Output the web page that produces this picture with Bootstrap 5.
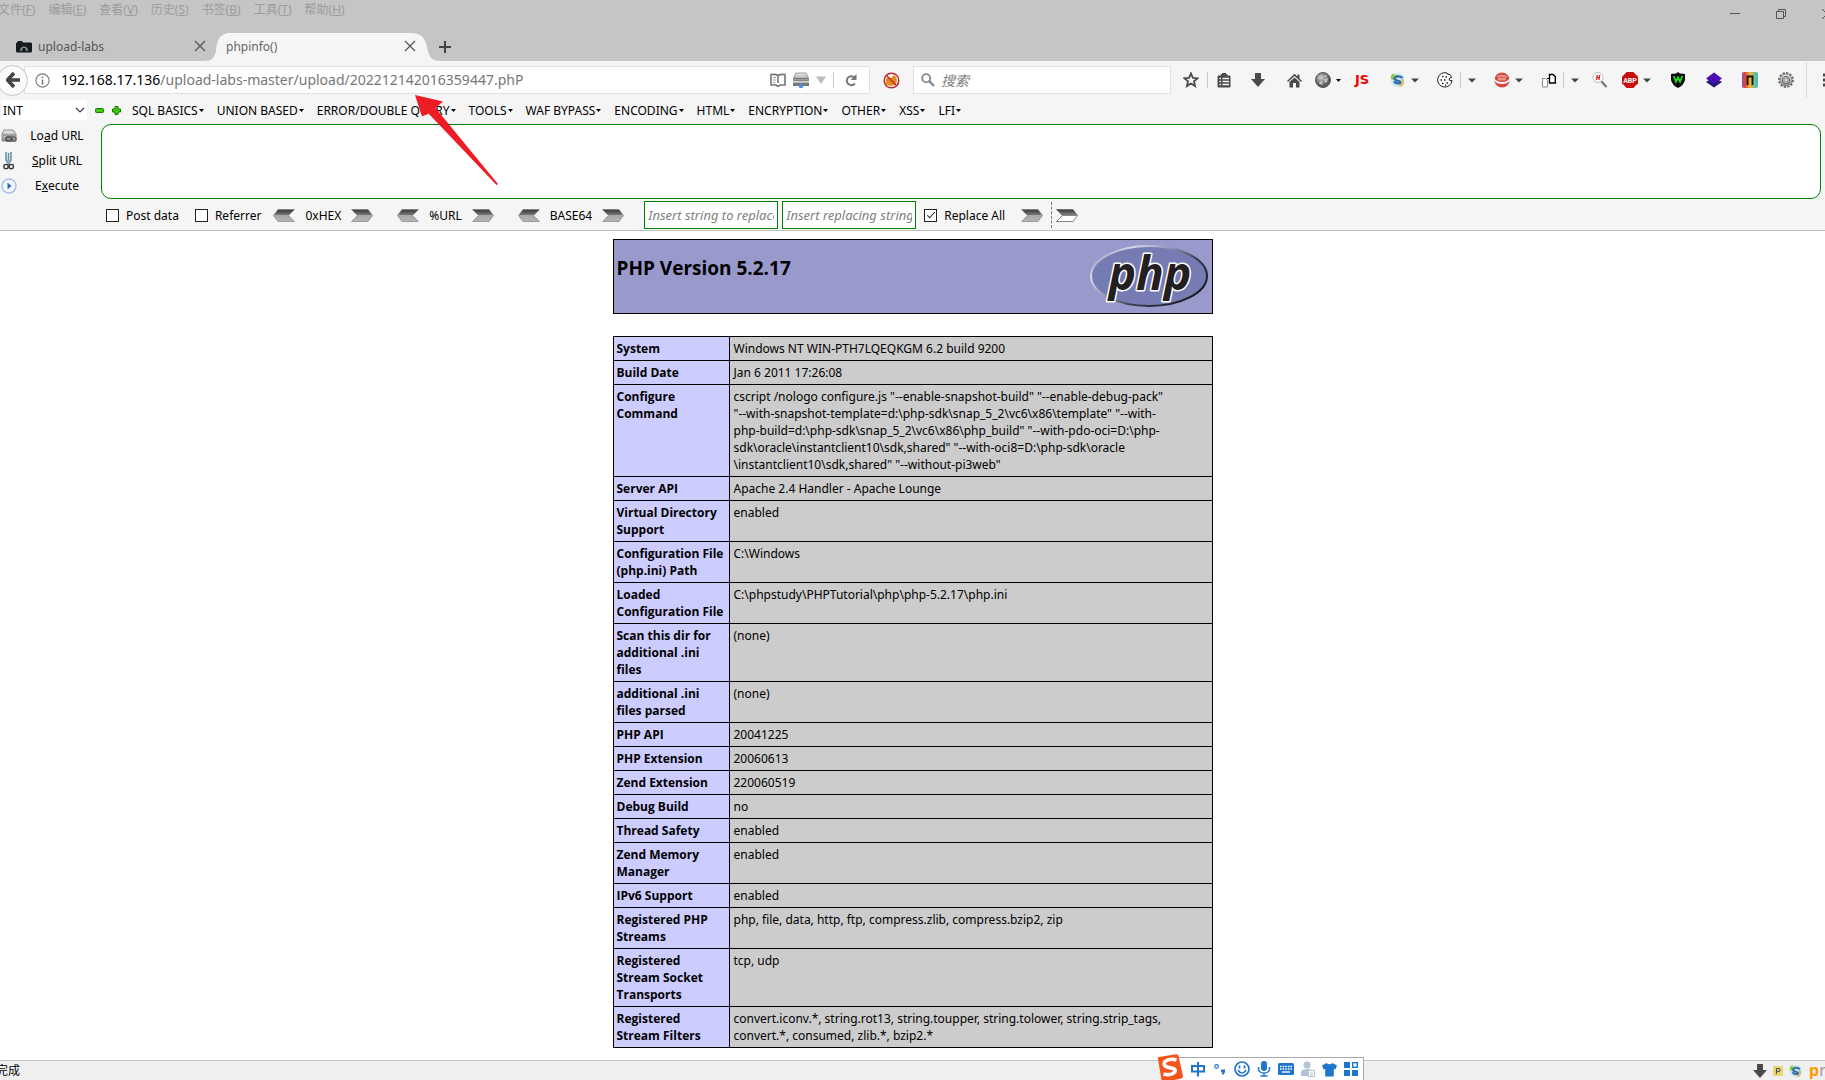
<!DOCTYPE html>
<html lang="zh-CN">
<head>
<meta charset="utf-8">
<meta name="viewport" content="width=device-width, initial-scale=1">
<title>phpinfo()</title>
<link href="https://cdn.jsdelivr.net/npm/bootstrap@5.3.0/dist/css/bootstrap.min.css" rel="stylesheet">
<script src="https://cdn.jsdelivr.net/npm/bootstrap@5.3.0/dist/js/bootstrap.bundle.min.js"></script>
<style>
  body { font-family: "Noto Sans", "Noto Sans CJK SC", sans-serif; font-size: 12px; line-height: 17px; color: #000; background: #fff; }
  button { font: inherit; color: inherit; background: none; border: 0; padding: 0; }
  svg { display: block; flex: none; }
  .titlebar { background: #c5c5c5; }
  .menu-line { height: 33px; padding-top: 1px; }
  .menu-line nav { gap: 13px; margin-left: -2px; color: #9c9c9c; }
  .menu-line a { color: inherit; text-decoration: none; }
  .win-buttons { gap: 30px; color: #555; padding-top: 5px; margin-right: -10px; }
  .tab-line { height: 28px; color: #555; }
  .tab-idle { width: 206px; padding: 0 0 2px 16px; gap: 6px; }
  .tab-live { width: 233px; padding: 0 23px 2px 20px; color: #666; }
  .tab-live > * { position: relative; }
  .tab-live > .tab-shape { position: absolute; left: -2px; top: 0; }
  .chrome-tools { background: #f5f5f5; border-bottom: 1px solid #bfbfbf; }
  .nav-line { height: 38px; }
  .back-btn { width: 31px; height: 31px; margin-left: -3px; border: 1px solid #c4c4c4; border-radius: 50%; background: #fbfbfb; z-index: 1; }
  .url-field { height: 28px; background: #fff; border: 1px solid #e0e0e0; margin-left: -4px; padding: 0 8px 0 10px; flex: 1 1 0; min-width: 0; }
  .url-text { font-size: 14px; line-height: 20px; color: #777; white-space: nowrap; padding-left: 11px; }
  .url-text b { font-weight: 400; color: #000; }
  .url-tools { gap: 7px; }
  .search-field { height: 28px; background: #fff; border: 1px solid #e0e0e0; padding: 0 7px; gap: 6px; flex: 0 1 258px; min-width: 0; }
  .search-field input { border: 0; outline: 0; width: 100%; min-width: 0; font-size: 14px; font-style: italic; padding: 0; }
  .search-field input::placeholder { color: #808080; }
  .block-btn { width: 43px; }
  .rule-v { width: 1px; height: 16px; background: #c8c8c8; flex: none; }
  .rule-tall { width: 1px; height: 36px; background: #dcdcdc; flex: none; margin: 0 16px 0 2px; }
  .burger { margin-right: -12px; }
  .slot-24, .slot-32, .slot-36, .slot-48, .slot-56 { display: flex; align-items: center; justify-content: center; flex: none; height: 30px; gap: 5px; }
  .slot-24 { width: 24px; } .slot-32 { width: 32px; } .slot-36 { width: 36px; } .slot-48 { width: 48px; } .slot-56 { width: 56px; gap: 7px; }
  .js-word { font: 700 13px/16px "DejaVu Sans", sans-serif; color: #f00000; }
  .hack-top { height: 22px; gap: 7px; }
  .hack-top .form-select { width: 86px; height: 20px; margin-left: 1px; padding: 0 20px 0 2px; border: 0; border-radius: 0; font-size: 12px; line-height: 17px; background-size: 10px 10px; background-position: right 2px center; color: #000; }
  .pm { gap: 8px; width: 33px; padding-left: 1px; margin-right: -2px; }
  .hack-menus { gap: 13px; padding-left: 0; }
  .hack-menus button { display: flex; align-items: center; gap: 1px; white-space: nowrap; }
  .hack-mid { padding-top: 2px; }
  .side-cmds { width: 101px; }
  .side-cmds button { display: flex; align-items: center; height: 25px; padding-left: 1px; }
  .side-cmds span { width: 80px; text-align: center; }
  .hack-area { height: 75px; border: 1px solid #008000; border-radius: 10px; resize: none; outline: 0; background: #fff; margin: 1px 4px 0 0; min-width: 0; }
  .hack-bottom { height: 31px; padding: 1px 0 0 106px; }
  .tick { appearance: none; width: 13px; height: 13px; border: 1px solid #222; background: #fff; margin: 0; flex: none; display: block; }
  .tick:checked::before { content: ""; display: block; width: 8px; height: 4px; margin: 2px 0 0 2px; border-left: 1px solid #222; border-bottom: 1px solid #222; transform: rotate(-48deg); }
  .tick-pair { display: flex; align-items: center; gap: 7px; }
  .codec { display: flex; align-items: center; gap: 10px; }
  .swap-in { width: 134px; height: 28px; border: 1px solid #008000; background: #fff; padding: 0 3px; outline: 0; font-size: 13px; font-style: italic; }
  .swap-in::placeholder { color: #808080; }
  .dash { border-left: 1px dashed #777; height: 26px; }
  main { padding-top: 8px; }
  .info-wrap { max-width: 600px; }
  .info-head { background: #9999cc; border: 1px solid #000; height: 75px; padding: 4px 3px 0 3px; margin-bottom: 22px; }
  .info-head h1 { font: 700 19px/26px "Open Sans", sans-serif; margin: 11px 0 0; }
  .info-head svg { overflow: visible; }
  .info-table { width: 100%; border-collapse: collapse; table-layout: fixed; }
  .info-table th, .info-table td { border: 1px solid #000; padding: 3px; vertical-align: top; }
  .info-table th { width: 116px; background: #ccccff; font-family: "Open Sans", sans-serif; font-weight: 700; }
  .info-table td { background: #cccccc; padding-left: 4px; }
  .status-line { height: 20px; border-top: 1px solid #c3c3c3; background: #f0f0f0; }
  .status-line > span { margin-left: -4px; padding-top: 1px; }
  .status-icons { gap: 6px; height: 19px; }
  .pr-word { font-size: 16px; line-height: 17px; color: #999; width: 16px; overflow: hidden; }
  .pr-word b { color: #ff9900; }
  .ime-bar { right: 461px; bottom: 0; height: 23px; width: 201px; background: #fff; border: 1px solid #a9a9a9; border-bottom: 0; padding: 0 5px 0 26px; color: #1f75c9; }
  .ime-logo { left: -8px; top: -4px; }
  .pointer { left: 412px; top: 92px; pointer-events: none; }
</style>
</head>
<body class="d-flex flex-column min-vh-100 position-relative overflow-x-hidden">

<svg width="0" height="0" class="position-absolute" aria-hidden="true">
  <defs>
    <linearGradient id="gArrow" x1="0" y1="0" x2="0" y2="1"><stop offset="0" stop-color="#383838"/><stop offset=".48" stop-color="#7b7b7b"/><stop offset=".5" stop-color="#a8a8a8"/><stop offset="1" stop-color="#b4b4b4"/></linearGradient>
    <linearGradient id="gArrowW" x1="0" y1="0" x2="0" y2="1"><stop offset="0" stop-color="#383838"/><stop offset=".52" stop-color="#8b8b8b"/><stop offset=".53" stop-color="#fff"/><stop offset="1" stop-color="#fff"/></linearGradient>
    <linearGradient id="gRain"><stop offset="0" stop-color="#9a4ea0"/><stop offset=".2" stop-color="#e0443c"/><stop offset=".5" stop-color="#f2b233"/><stop offset=".75" stop-color="#7fc08a"/><stop offset="1" stop-color="#3fb8c8"/></linearGradient>
    <linearGradient id="gMetal" x1="0" y1="0" x2="0" y2="1"><stop offset="0" stop-color="#eee"/><stop offset="1" stop-color="#8c8c8c"/></linearGradient>
    <linearGradient id="gRim" x1="0" y1="0" x2="1" y2=".7"><stop offset="0" stop-color="#6f77a8"/><stop offset=".25" stop-color="#d9dbea"/><stop offset=".45" stop-color="#9b9fc0"/><stop offset=".7" stop-color="#3c3d50"/><stop offset="1" stop-color="#17171c"/></linearGradient>
    <radialGradient id="gBall" cx=".4" cy=".35"><stop offset="0" stop-color="#c9c9c9"/><stop offset="1" stop-color="#5c5c5c"/></radialGradient>
    <symbol id="aR" viewBox="0 0 22 13"><path d="M.5.5H17L21.5 6.500 17 12.500H.5L6.500 6.500Z" fill="url(#gArrow)" stroke="#777" stroke-width=".6"/></symbol>
    <symbol id="aL" viewBox="0 0 22 13"><path d="M21.500.5H5L.5 6.500 5 12.500H21.500L15.500 6.500Z" fill="url(#gArrow)" stroke="#777" stroke-width=".6"/></symbol>
    <symbol id="cr" viewBox="0 0 8 5"><path d="M0 .5H8L4 4.500Z" fill="#444"/></symbol>
    <symbol id="crs" viewBox="0 0 5 3"><path d="M0 0H5L2.500 3Z" fill="#000"/></symbol>
    <symbol id="x12" viewBox="0 0 12 12"><path d="M1 1L11 11M11 1L1 11" stroke="#555" stroke-width="1.200"/></symbol>
    <symbol id="swirl" viewBox="0 0 16 16"><circle cx="8" cy="8" r="7" fill="#bfe4f5" opacity=".8"/><path d="M1 7C0 4 2 1.500 4.500 1.500L4 4C5 3 6.500 2.800 7.500 3L5 5.500C4 6 3.500 7 3.500 8Z" fill="#8fc93a"/><path d="M12.500 6C10 3.500 5 4 4.500 6.800C4.500 9 10.500 8.500 10.500 10.200C10.500 12 6 12 4 9.500" fill="none" stroke="#2f6cab" stroke-width="2.200"/><path d="M12 6.500C14.500 9 14 12.500 11 14.800L8.500 13.500C11.500 12.500 12.500 10 11.500 8Z" fill="#e8ae3c"/></symbol>
    <symbol id="dl" viewBox="0 0 14 14"><path d="M4 0H10V6H14L7 14 0 6H4Z" fill="#4a4a4a"/></symbol>
  </defs>
</svg>

<header>
  <div class="titlebar">
    <div class="menu-line d-flex justify-content-between align-items-start">
      <nav class="d-flex" aria-label="菜单">
        <a href="#">文件(<u>F</u>)</a><a href="#">编辑(<u>E</u>)</a><a href="#">查看(<u>V</u>)</a><a href="#">历史(<u>S</u>)</a><a href="#">书签(<u>B</u>)</a><a href="#">工具(<u>T</u>)</a><a href="#">帮助(<u>H</u>)</a>
      </nav>
      <div class="win-buttons d-flex">
        <button type="button" aria-label="最小化"><svg width="16" height="16"><path d="M3 7.500H13" stroke="#555"/></svg></button>
        <button type="button" aria-label="还原"><svg width="16" height="16"><path d="M3.500 5.500H10.500V12.500H3.500ZM5.500 5V3.500H12.500V10.500H11" fill="none" stroke="#555"/></svg></button>
        <button type="button" aria-label="关闭"><svg width="16" height="16"><path d="M3 3L13 13M13 3L3 13" stroke="#555"/></svg></button>
      </div>
    </div>
    <div class="tab-line d-flex">
      <div class="tab-idle d-flex align-items-center">
        <svg width="16" height="16" viewBox="0 0 16 16"><path d="M1 4.500L2 3H6L7 4.500H15Q16 4.500 16 6V13Q16 14.500 14.500 14.500H1.500Q0 14.500 0 13V6Q0 4.500 1 4.500Z" fill="#161a1c"/><path d="M4 13A4 4.500 0 0 1 12 13L9.500 12.500 10 11 8 9.500 6 11 6.500 12.500Z" fill="#8b9599"/></svg>
        <span class="me-auto">upload-labs</span>
        <button type="button" aria-label="关闭标签页"><svg width="12" height="12"><use href="#x12"/></svg></button>
      </div>
      <div class="tab-live d-flex align-items-center position-relative">
        <svg class="tab-shape" width="237" height="28" viewBox="0 0 237 28"><path d="M0 28C8 28 10 25 12 18C13 8 15 0 27 0H207C219 0 222 8 223 14C225 24 227 28 237 28Z" fill="#f5f5f5"/></svg>
        <span class="me-auto">phpinfo()</span>
        <button type="button" aria-label="关闭标签页"><svg width="12" height="12"><use href="#x12"/></svg></button>
      </div>
      <button type="button" aria-label="新标签页"><svg width="12" height="12"><path d="M6 0V12M0 6H12" stroke="#444" stroke-width="2"/></svg></button>
    </div>
  </div>

  <div class="chrome-tools">
    <div class="nav-line d-flex align-items-center">
      <button type="button" class="back-btn d-flex align-items-center justify-content-center flex-shrink-0" aria-label="后退"><svg width="14" height="16" viewBox="0 0 14 16"><path d="M8 1L1.500 8L8 15M2 8H14" fill="none" stroke="#444" stroke-width="3.600"/></svg></button>
      <div class="url-field d-flex align-items-center">
        <svg width="15" height="15" viewBox="0 0 15 15"><circle cx="7.500" cy="7.500" r="6.600" fill="none" stroke="#777" stroke-width="1.100"/><path d="M7.500 3.500V5M7.500 6.500V11.500" stroke="#777" stroke-width="1.500"/></svg>
        <div class="url-text me-auto"><b>192.168.17.136</b>/upload-labs-master/upload/202212142016359447.phP</div>
        <div class="url-tools d-flex align-items-center">
          <button type="button" aria-label="阅读"><svg width="16" height="14" viewBox="0 0 16 14"><path d="M8 2.500Q6 1 1 1.500V12H6L8 13.500 10 12H15V1.500Q10 1 8 2.500ZM8 2.500V10" fill="none" stroke="#777" stroke-width="1.600"/><path d="M3 4.500H6M3 7H6M3 9.500H5" stroke="#999"/></svg></button>
          <button type="button" aria-label="代理"><svg width="16" height="17" viewBox="0 0 16 17"><path d="M3 1H13L15.500 6V9H.5V6Z" fill="url(#gMetal)" stroke="#777" stroke-width=".7"/><path d="M.5 6.500H15.500" stroke="#777"/><path d="M0 10.500H16V14H0Z" fill="#777"/><circle cx="8" cy="14" r="2.300" fill="#4c8be0"/></svg></button>
          <svg width="10" height="8"><path d="M0 .5H10L5 8Z" fill="#bbb"/></svg>
          <span class="rule-v"></span>
          <button type="button" aria-label="刷新" class="mx-1"><svg width="12" height="13" viewBox="0 0 12 13"><path d="M9.800 9.500A4.500 4.500 0 1 1 9.500 3.500" fill="none" stroke="#777" stroke-width="2"/><path d="M11.500 0V6H5.500Z" fill="#777"/></svg></button>
        </div>
      </div>
      <button type="button" class="block-btn d-flex justify-content-center flex-shrink-0" aria-label="拦截"><svg width="17" height="17" viewBox="0 0 17 17"><path d="M3 7L5 5 8 6 11 3 13 5 14 9 12 13 7 14 3 12Z" fill="#e28a1a"/><circle cx="8.500" cy="8.500" r="7.300" fill="none" stroke="#c5282c" stroke-width="1.500"/><path d="M3.500 3.500L13.500 13.500" stroke="#c5282c" stroke-width="1.500"/></svg></button>
      <div class="search-field d-flex align-items-center me-1">
        <svg width="14" height="14" viewBox="0 0 14 14"><circle cx="5.200" cy="5.200" r="4" fill="none" stroke="#888" stroke-width="1.800"/><path d="M8.200 8.200L13 13" stroke="#888" stroke-width="2.400"/></svg>
        <input type="search" placeholder="搜索" aria-label="搜索">
      </div>
      <button type="button" class="slot-32" aria-label="书签"><svg width="16" height="16" viewBox="0 0 16 16"><path d="M8 1.500L9.900 5.800 14.600 6.200 11 9.300 12.100 14 8 11.500 3.900 14 5 9.300 1.400 6.200 6.100 5.800Z" fill="none" stroke="#4a4a4a" stroke-width="1.800"/></svg></button>
      <span class="rule-v"></span>
      <button type="button" class="slot-32" aria-label="列表"><svg width="14" height="15" viewBox="0 0 14 15"><path d="M1 3H4V1.500H5.500V0H8.500V1.500H10V3H13V14H1Z" fill="#4a4a4a" stroke="#4a4a4a"/><path d="M2.500 5.500H4M5.500 5.500H12M2.500 8.500H4M5.500 8.500H12M2.500 11.500H4M5.500 11.500H12" stroke="#f5f5f5" stroke-width="1.600"/></svg></button>
      <button type="button" class="slot-36" aria-label="下载"><svg width="14" height="14"><use href="#dl"/></svg></button>
      <button type="button" class="slot-36" aria-label="主页"><svg width="15" height="15" viewBox="0 0 15 15"><path d="M0 8L7.500 .8 10.500 3.600V1.500H12.500V5.500L15 8L14 9 7.500 3 1 9Z" fill="#4a4a4a"/><path d="M2.500 9L7.500 4.500 12.500 9V14.500H9V10H6V14.500H2.500Z" fill="#4a4a4a"/></svg></button>
      <button type="button" class="slot-32" aria-label="地球"><svg width="16" height="16" viewBox="0 0 16 16"><circle cx="8" cy="8" r="7.500" fill="url(#gBall)" stroke="#555"/><path d="M3 5L7 3 8 6 5 8ZM9 7L13 6 12 10 10 11ZM4 10L7 9 8 13 5 12ZM10 3L12 4 11 5 9 5Z" fill="#c4c4c4"/></svg><svg width="5" height="3"><use href="#crs"/></svg></button>
      <button type="button" class="slot-36 js-word">JS</button>
      <button type="button" class="slot-48" aria-label="代理设置"><svg width="16" height="16"><use href="#swirl"/></svg><svg width="8" height="5"><use href="#cr"/></svg></button>
      <button type="button" class="slot-56" aria-label="Cookie"><svg width="16" height="16" viewBox="0 0 16 16"><path d="M10 1A7.200 7.200 0 1 0 15 8.500Q12 9.500 12 7Q13 5.500 14.500 5.500Q14 3 12 2Q11 4 10 1Z" fill="#fff" stroke="#222"/><path d="M5 4.500h1.500M8.500 5h1.500M3.500 8h1.500M7 8h1.500M5 11.500h1.500M9.500 11h1.500M8 13.200h1" stroke="#222" stroke-width="1.500"/></svg><span class="rule-v"></span><svg width="8" height="5"><use href="#cr"/></svg></button>
      <button type="button" class="slot-48" aria-label="眼睛"><svg width="16" height="16" viewBox="0 0 16 16"><circle cx="8" cy="8" r="7.600" fill="#d5473f"/><path d="M0 6Q2 9 4 9.200Q8 11 12 9.200Q14 9 16 6V8.500Q13 12 8 12T0 8.500Z" fill="#f5f5f5"/><path d="M4 4H12V8Q11 10 8 10T4 8Z" fill="#d96a62"/><path d="M3 4.500Q8 2.500 13 4.500M4 7H12" stroke="#f0b5b0" fill="none"/></svg><svg width="8" height="5"><use href="#cr"/></svg></button>
      <button type="button" class="slot-56" aria-label="页面"><svg width="14" height="15" viewBox="0 0 14 15"><path d="M.5 5.500H3.500L5.500 7.500V14H.5Z" fill="#fff" stroke="#888"/><path d="M7.500 1.500H11L13.300 3.800V10H7.500Z" fill="#fff" stroke="#000" stroke-width="1.400"/><path d="M5 5.500H8" stroke="#000"/></svg><span class="rule-v"></span><svg width="8" height="5"><use href="#cr"/></svg></button>
      <button type="button" class="slot-24" aria-label="HackBar 搜索"><svg width="16" height="16" viewBox="0 0 16 16"><circle cx="6" cy="5.500" r="5" fill="#fff" stroke="#bbb"/><path d="M4.500 8L5.200 3M7 8L7.700 3M5 5.500H7.500" stroke="#d22" stroke-width="1.300"/><path d="M9.500 9.500L14.500 15" stroke="#777" stroke-width="2.200"/></svg></button>
      <button type="button" class="slot-48" aria-label="ABP"><svg width="16" height="16" viewBox="0 0 16 16"><path d="M4.700 0H11.300L16 4.700V11.300L11.300 16H4.700L0 11.300V4.700Z" fill="#c70d0d"/><text x="8" y="10.600" text-anchor="middle" font-family="Roboto, sans-serif" font-weight="700" font-size="7" fill="#fff">ABP</text></svg><svg width="8" height="5"><use href="#cr"/></svg></button>
      <button type="button" class="slot-36" aria-label="Wappalyzer"><svg width="14" height="16" viewBox="0 0 14 16"><path d="M7 0L9 1.500 14 2V8Q13 13 7 16Q1 13 0 8V2L5 1.500Z" fill="#0b0b0b"/><path d="M2.700 4L5 9.500 7 5.500 9 9.500 11.300 4" fill="none" stroke="#1fe01f" stroke-width="1.900"/></svg></button>
      <button type="button" class="slot-36" aria-label="图层"><svg width="16" height="16" viewBox="0 0 16 16"><path d="M0 10L8 5 16 10 8 15.500Z" fill="#251a78"/><path d="M0 6.500L8 .5 16 6.500 8 12Z" fill="#4b0bb0"/></svg></button>
      <button type="button" class="slot-36" aria-label="彩虹"><svg width="16" height="16" viewBox="0 0 16 16"><rect width="16" height="16" rx="2" fill="url(#gRain)"/><path d="M5.500 13V4.500H10.500V13" fill="none" stroke="#111" stroke-width="1.800"/></svg></button>
      <button type="button" class="slot-36" aria-label="设置"><svg width="16" height="16" viewBox="0 0 16 16"><circle cx="8" cy="8" r="6.800" fill="none" stroke="#666" stroke-width="2.200" stroke-dasharray="2.200 1.350"/><circle cx="8" cy="8" r="6" fill="url(#gMetal)" stroke="#777" stroke-width=".8"/><circle cx="8" cy="8" r="3.600" fill="#bbb" stroke="#555" stroke-width=".9"/><circle cx="8" cy="8" r="1.500" fill="#f5f5f5" stroke="#777" stroke-width=".6"/></svg></button>
      <span class="rule-tall"></span>
      <button type="button" class="burger" aria-label="菜单"><svg width="14" height="14"><path d="M0 2H14M0 7H14M0 12H14" stroke="#4a4a4a" stroke-width="3"/></svg></button>
    </div>

    <div class="hack-top d-flex align-items-center">
      <select class="form-select flex-shrink-0" aria-label="类型"><option>INT</option></select>
      <div class="pm d-flex align-items-center">
        <button type="button" aria-label="减"><svg width="9" height="9"><rect x=".5" y="2.500" width="8" height="4" rx="1" fill="#3ccc0e" stroke="#187800"/></svg></button>
        <button type="button" aria-label="加"><svg width="9" height="9"><path d="M3 .5H6V3H8.500V6H6V8.500H3V6H.5V3H3Z" fill="#3ccc0e" stroke="#187800"/></svg></button>
      </div>
      <nav class="hack-menus d-flex" aria-label="HackBar">
        <button type="button">SQL BASICS<svg width="5" height="3"><use href="#crs"/></svg></button>
        <button type="button">UNION BASED<svg width="5" height="3"><use href="#crs"/></svg></button>
        <button type="button">ERROR/DOUBLE QUERY<svg width="5" height="3"><use href="#crs"/></svg></button>
        <button type="button">TOOLS<svg width="5" height="3"><use href="#crs"/></svg></button>
        <button type="button">WAF BYPASS<svg width="5" height="3"><use href="#crs"/></svg></button>
        <button type="button">ENCODING<svg width="5" height="3"><use href="#crs"/></svg></button>
        <button type="button">HTML<svg width="5" height="3"><use href="#crs"/></svg></button>
        <button type="button">ENCRYPTION<svg width="5" height="3"><use href="#crs"/></svg></button>
        <button type="button">OTHER<svg width="5" height="3"><use href="#crs"/></svg></button>
        <button type="button">XSS<svg width="5" height="3"><use href="#crs"/></svg></button>
        <button type="button">LFI<svg width="5" height="3"><use href="#crs"/></svg></button>
      </nav>
    </div>

    <div class="hack-mid d-flex">
      <div class="side-cmds flex-shrink-0">
        <button type="button"><svg width="16" height="16" viewBox="0 0 16 16"><path d="M3 2H12L15 6V13H1V6Z" fill="url(#gMetal)" stroke="#888"/><path d="M2 7H14" stroke="#777"/><rect x="5" y="9" width="6" height="4" rx="2" fill="none" stroke="#444" stroke-width="1.400"/><rect x="9" y="9" width="6" height="4" rx="2" fill="none" stroke="#666" stroke-width="1.400"/></svg><span>Lo<u>a</u>d URL</span></button>
        <button type="button"><svg width="16" height="18" viewBox="0 0 16 18"><path d="M5 0V8L8.500 13M10 0V8L6.500 13M7.500 1V9" stroke="#6d93a8" stroke-width="1.600" fill="none"/><circle cx="5" cy="14.500" r="2.200" fill="none" stroke="#333" stroke-width="1.300"/><circle cx="10.300" cy="14.500" r="2.200" fill="none" stroke="#333" stroke-width="1.300"/></svg><span><u>S</u>plit URL</span></button>
        <button type="button"><svg width="16" height="16" viewBox="0 0 16 16"><circle cx="8" cy="8" r="7" fill="#f4f8ff" stroke="#a9c0e6" stroke-width="1.600"/><path d="M6.500 4.500L10.500 8 6.500 11.500Z" fill="#2a63c4"/></svg><span>E<u>x</u>ecute</span></button>
      </div>
      <textarea class="hack-area flex-grow-1" aria-label="URL"></textarea>
    </div>

    <div class="hack-bottom d-flex align-items-center">
      <label class="tick-pair me-3"><input class="tick" type="checkbox">Post data</label>
      <label class="tick-pair me-2"><input class="tick" type="checkbox">Referrer</label>
      <div class="codec ms-1 me-4"><button type="button" aria-label="HEX 解码"><svg width="22" height="13"><use href="#aL"/></svg></button>0xHEX<button type="button" aria-label="HEX 编码"><svg width="22" height="13"><use href="#aR"/></svg></button></div>
      <div class="codec me-4"><button type="button" aria-label="URL 解码"><svg width="22" height="13"><use href="#aL"/></svg></button>%URL<button type="button" aria-label="URL 编码"><svg width="22" height="13"><use href="#aR"/></svg></button></div>
      <div class="codec me-3"><button type="button" aria-label="BASE64 解码"><svg width="22" height="13"><use href="#aL"/></svg></button>BASE64<button type="button" aria-label="BASE64 编码"><svg width="22" height="13"><use href="#aR"/></svg></button></div>
      <input class="swap-in ms-1 me-1" type="text" placeholder="Insert string to replace" aria-label="Insert string to replace">
      <input class="swap-in me-2" type="text" placeholder="Insert replacing string" aria-label="Insert replacing string">
      <label class="tick-pair me-3"><input class="tick" type="checkbox" checked>Replace All</label>
      <button type="button" aria-label="替换" class="me-2"><svg width="22" height="13"><use href="#aR"/></svg></button>
      <span class="dash me-1"></span>
      <button type="button" aria-label="全部替换"><svg width="22" height="13" viewBox="0 0 22 13"><path d="M.5.5H17L21.500 6.500 17 12.500H.5L6.500 6.500Z" fill="url(#gArrowW)" stroke="#666" stroke-width=".8"/></svg></button>
    </div>
  </div>
</header>

<main class="flex-grow-1">
  <div class="info-wrap mx-auto">
    <div class="info-head d-flex justify-content-between align-items-start">
      <h1>PHP Version 5.2.17</h1>
      <svg width="120" height="67" viewBox="0 0 120 67" role="img" aria-label="PHP">
        <ellipse cx="60" cy="32" rx="58" ry="30" fill="#777bb3" stroke="url(#gRim)" stroke-width="2"/>
        <text x="61" y="46" text-anchor="middle" font-family="Open Sans, sans-serif" font-style="italic" font-weight="700" font-size="46" fill="#231f20" stroke="#fff" stroke-width="3" stroke-linejoin="round" paint-order="stroke">php</text>
      </svg>
    </div>
    <table class="info-table">
      <tbody>
        <tr><th scope="row">System</th><td>Windows NT WIN-PTH7LQEQKGM 6.2 build 9200</td></tr>
        <tr><th scope="row">Build Date</th><td>Jan 6 2011 17:26:08</td></tr>
        <tr><th scope="row">Configure Command</th><td>cscript /nologo configure.js "--enable-snapshot-build" "--enable-debug-pack"<br>"--with-snapshot-template=d:\php-sdk\snap_5_2\vc6\x86\template" "--with-<br>php-build=d:\php-sdk\snap_5_2\vc6\x86\php_build" "--with-pdo-oci=D:\php-<br>sdk\oracle\instantclient10\sdk,shared" "--with-oci8=D:\php-sdk\oracle<br>\instantclient10\sdk,shared" "--without-pi3web"</td></tr>
        <tr><th scope="row">Server API</th><td>Apache 2.4 Handler - Apache Lounge</td></tr>
        <tr><th scope="row">Virtual Directory Support</th><td>enabled</td></tr>
        <tr><th scope="row">Configuration File (php.ini) Path</th><td>C:\Windows</td></tr>
        <tr><th scope="row">Loaded Configuration File</th><td>C:\phpstudy\PHPTutorial\php\php-5.2.17\php.ini</td></tr>
        <tr><th scope="row">Scan this dir for additional .ini files</th><td>(none)</td></tr>
        <tr><th scope="row">additional .ini files parsed</th><td>(none)</td></tr>
        <tr><th scope="row">PHP API</th><td>20041225</td></tr>
        <tr><th scope="row">PHP Extension</th><td>20060613</td></tr>
        <tr><th scope="row">Zend Extension</th><td>220060519</td></tr>
        <tr><th scope="row">Debug Build</th><td>no</td></tr>
        <tr><th scope="row">Thread Safety</th><td>enabled</td></tr>
        <tr><th scope="row">Zend Memory Manager</th><td>enabled</td></tr>
        <tr><th scope="row">IPv6 Support</th><td>enabled</td></tr>
        <tr><th scope="row">Registered PHP Streams</th><td>php, file, data, http, ftp, compress.zlib, compress.bzip2, zip</td></tr>
        <tr><th scope="row">Registered Stream Socket Transports</th><td>tcp, udp</td></tr>
        <tr><th scope="row">Registered Stream Filters</th><td>convert.iconv.*, string.rot13, string.toupper, string.tolower, string.strip_tags, convert.*, consumed, zlib.*, bzip2.*</td></tr>
      </tbody>
    </table>
  </div>
</main>

<footer class="status-line d-flex justify-content-between">
  <span>完成</span>
  <div class="status-icons d-flex align-items-center">
    <svg width="14" height="14"><use href="#dl"/></svg>
    <svg width="10" height="10" viewBox="0 0 10 10"><rect width="10" height="10" fill="#ecd873"/><path d="M3.500 8V2.500H5.500Q7 2.500 7 4T5.500 5.500H3.500" fill="none" stroke="#555" stroke-width="1.200"/></svg>
    <svg width="14" height="14"><use href="#swirl"/></svg>
    <span class="pr-word"><b>p</b>r</span>
  </div>
</footer>

<div class="ime-bar position-absolute d-flex align-items-center justify-content-between">
  <svg class="ime-logo position-absolute" width="28" height="27" viewBox="0 0 28 27"><path d="M2 5Q1.500 3.500 3 3L20 .3Q22 0 22.500 2L27 22Q27 24 25.500 24.500L9 28Q6 28 5.500 26Z" fill="#f4551d"/><path d="M20.500 6Q13 4 9 7.500Q6.500 11 11 13L17 14.500Q21.500 16.500 17 19.500Q13 21.500 7.500 20" fill="none" stroke="#fff" stroke-width="3.600"/></svg>
  <svg width="16" height="16" viewBox="0 0 16 16"><path d="M2 5H14V10.500H2ZM8 1V15.500" fill="none" stroke="currentColor" stroke-width="2"/></svg>
  <svg width="14" height="16" viewBox="0 0 14 16"><circle cx="3.500" cy="5.500" r="1.800" fill="none" stroke="currentColor" stroke-width="1.200"/><path d="M8 8.500H12V11Q11.500 13.500 9 14V12.500L10 11.500H8Z" fill="currentColor"/></svg>
  <svg width="16" height="16" viewBox="0 0 16 16"><circle cx="8" cy="8" r="7" fill="none" stroke="currentColor" stroke-width="1.700"/><path d="M5.500 4.500V7.500M10.500 4.500V7.500" stroke="currentColor" stroke-width="1.700"/><path d="M4 9Q8 15 12 9" fill="none" stroke="currentColor" stroke-width="1.500"/></svg>
  <svg width="14" height="16" viewBox="0 0 14 16"><rect x="4" y="0" width="6" height="10" rx="3" fill="currentColor"/><path d="M1.500 6V8Q2 12 7 12T12.500 8V6M7 12V15M3.500 15H10.500" fill="none" stroke="currentColor" stroke-width="1.500"/></svg>
  <svg width="16" height="12" viewBox="0 0 16 12"><rect width="16" height="12" rx="1.500" fill="currentColor"/><path d="M2 3.500H14M2 6H14" stroke="#fff" stroke-width="1.400" stroke-dasharray="1.600 1"/><path d="M4 9H12" stroke="#fff" stroke-width="1.400"/></svg>
  <svg width="14" height="16" viewBox="0 0 14 16"><circle cx="6" cy="4" r="3.500" fill="#b4c2d6"/><path d="M0 15V11Q1 8 6 8T12 11V15Z" fill="#b4c2d6"/><path d="M7.500 9.500H13.500V15.500H7.500Z" fill="#fff" stroke="#b4c2d6"/><path d="M9 12H12M9 14H12" stroke="#b4c2d6"/></svg>
  <svg width="15" height="15" viewBox="0 0 15 15"><path d="M4.500 1Q7.500 3.500 10.500 1L15 3.500 13.500 7.500 11.800 6.800V14.500H3.200V6.800L1.500 7.500 0 3.500Z" fill="currentColor"/></svg>
  <svg width="14" height="14" viewBox="0 0 14 14"><path d="M0 0H6V6H0ZM0 8H6V14H0ZM8 8H14V14H8Z" fill="currentColor"/><rect x="8.700" y=".7" width="4.600" height="4.600" fill="none" stroke="currentColor" stroke-width="1.400"/></svg>
</div>

<svg class="pointer position-absolute" width="90" height="96" viewBox="412 92 90 96" aria-hidden="true"><path d="M415 95L443 101.500L435.500 108L498 184L496.500 185L428.500 113.500L422 116.500Z" fill="#ee1c25"/></svg>
</body>
</html>
